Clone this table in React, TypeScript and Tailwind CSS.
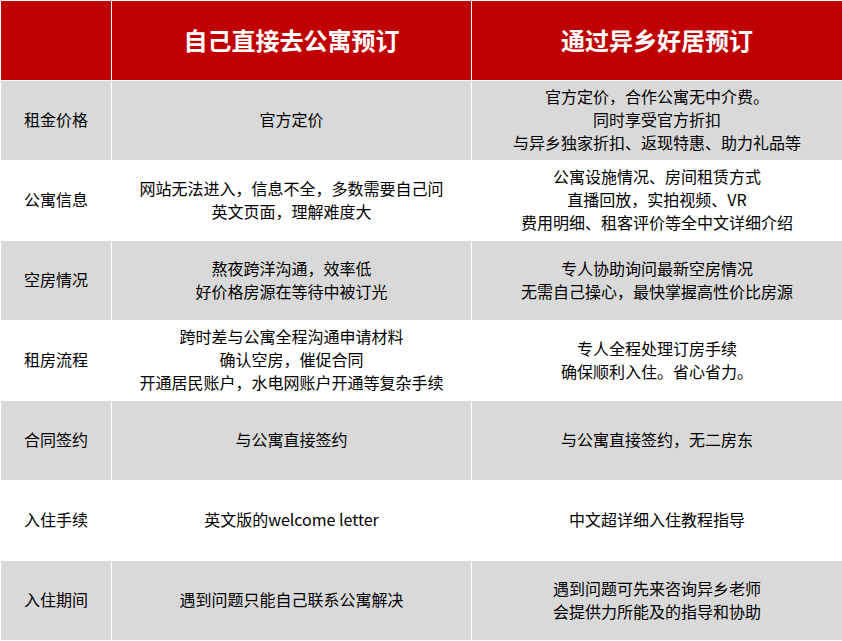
import React from "react";

type Row = { label: string; self: string[]; yx: string[] };

const rows: Row[] = [
  {
    label: "租金价格",
    self: ["官方定价"],
    yx: ["官方定价，合作公寓无中介费。", "同时享受官方折扣", "与异乡独家折扣、返现特惠、助力礼品等"],
  },
  {
    label: "公寓信息",
    self: ["网站无法进入，信息不全，多数需要自己问", "英文页面，理解难度大"],
    yx: ["公寓设施情况、房间租赁方式", "直播回放，实拍视频、VR", "费用明细、租客评价等全中文详细介绍"],
  },
  {
    label: "空房情况",
    self: ["熬夜跨洋沟通，效率低", "好价格房源在等待中被订光"],
    yx: ["专人协助询问最新空房情况", "无需自己操心，最快掌握高性价比房源"],
  },
  {
    label: "租房流程",
    self: ["跨时差与公寓全程沟通申请材料", "确认空房，催促合同", "开通居民账户，水电网账户开通等复杂手续"],
    yx: ["专人全程处理订房手续", "确保顺利入住。省心省力。"],
  },
  {
    label: "合同签约",
    self: ["与公寓直接签约"],
    yx: ["与公寓直接签约，无二房东"],
  },
  {
    label: "入住手续",
    self: ["英文版的welcome letter"],
    yx: ["中文超详细入住教程指导"],
  },
  {
    label: "入住期间",
    self: ["遇到问题只能自己联系公寓解决"],
    yx: ["遇到问题可先来咨询异乡老师", "会提供力所能及的指导和协助"],
  },
];

function Cell({ lines, gray }: { lines: string[]; gray: boolean }) {
  return (
    <div
      className={`flex flex-col items-center justify-center pb-[2px] text-center text-[16px] leading-[23px] text-black ${
        gray ? "bg-[#d9d9d9]" : "bg-white"
      }`}
    >
      {lines.map((l, i) => (
        <div key={i} className="whitespace-nowrap">
          {l}
        </div>
      ))}
    </div>
  );
}

export default function App() {
  return (
    <div
      className="w-[842px] h-[641px] bg-white pt-px pl-px overflow-hidden"
      style={{ fontFamily: '"Noto Sans CJK SC", "Noto Sans", sans-serif' }}
    >
      <div className="grid grid-cols-[110px_359px_370px] auto-rows-[79px] gap-px">
        <div className="bg-[#c00000]" />
        <div className="bg-[#c00000] flex items-center justify-center pb-[2px] text-white font-bold text-[24px]">
          自己直接去公寓预订
        </div>
        <div className="bg-[#c00000] flex items-center justify-center pb-[2px] text-white font-bold text-[24px]">
          通过异乡好居预订
        </div>
        {rows.map((r, i) => {
          const gray = i % 2 === 0;
          return (
            <React.Fragment key={r.label}>
              <Cell lines={[r.label]} gray={gray} />
              <Cell lines={r.self} gray={gray} />
              <Cell lines={r.yx} gray={gray} />
            </React.Fragment>
          );
        })}
      </div>
    </div>
  );
}
